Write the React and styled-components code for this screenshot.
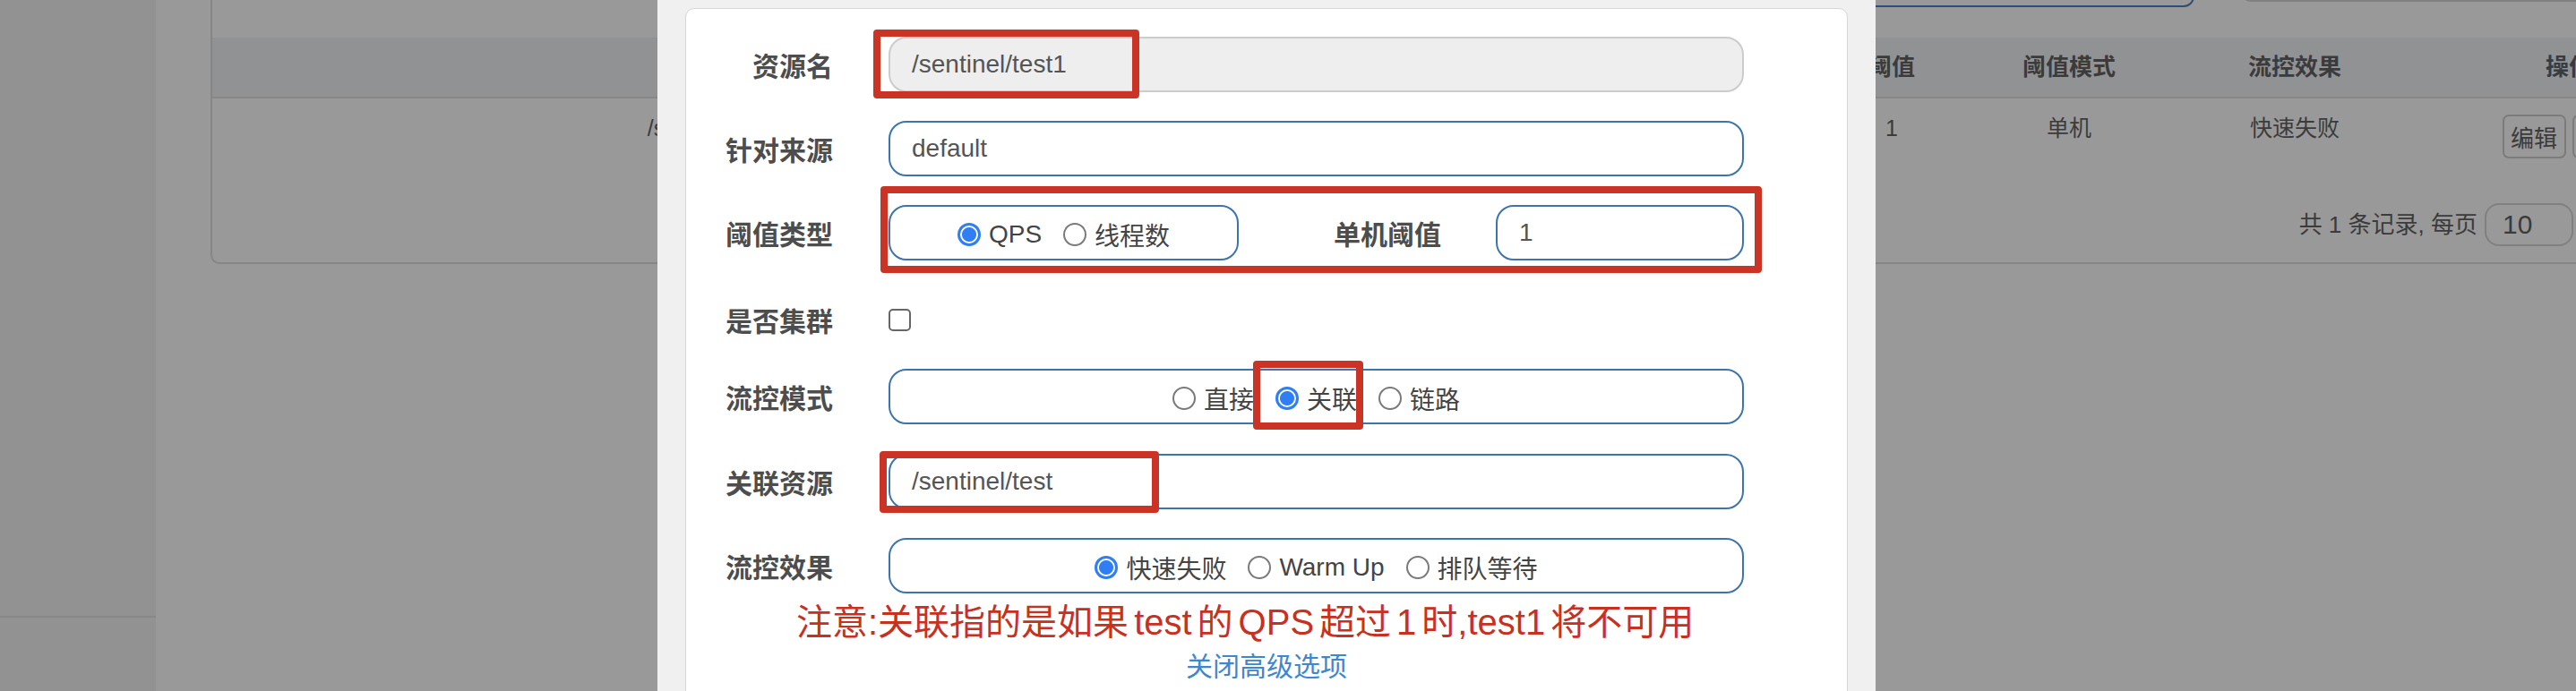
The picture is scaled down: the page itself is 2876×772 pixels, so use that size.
import styled, { createGlobalStyle } from 'styled-components';

const GlobalStyle = createGlobalStyle`
  html, body {
    margin: 0;
    padding: 0;
  }
  body {
    font-family: "Liberation Sans", "Noto Sans CJK SC", sans-serif;
    background: #999999;
  }
  * {
    box-sizing: border-box;
  }
`;

const Page = styled.div`
  position: relative;
  display: flex;
  width: 2876px;
  height: 772px;
  overflow: hidden;
  background: #999999;
`;

/* dimmed page behind the dialog */

const Sidebar = styled.aside`
  width: 174px;
  flex-shrink: 0;
  background: #929292;
`;

const SidebarMenu = styled.div`
  height: 690px;
  border-bottom: 2px solid #888888;
`;

const Main = styled.main`
  flex: 1;
  min-width: 0;
  padding-left: 61px;
`;

const Card = styled.section`
  width: 2800px;
  margin-top: -60px;
  border: 2px solid #868686;
  border-radius: 10px;
  color: #3b3b3b;
`;

const Toolbar = styled.div`
  display: flex;
  align-items: flex-start;
  gap: 51px;
  height: 100px;
  padding-left: 1665px;
`;

const SearchBox = styled.div`
  width: ${(p) => p.$width}px;
  height: 60px;
  margin-top: ${(p) => p.$top}px;
  border: 2px solid ${(p) => p.$color};
  border-radius: 12px;
`;

const columns = '1126px 627px 244px 152px 352px 260px';

const HeadRow = styled.div`
  display: grid;
  grid-template-columns: ${columns};
  align-items: center;
  height: 68px;
  background: #919294;
  border-bottom: 2px solid #878787;
  font-size: 26px;
  font-weight: 700;
`;

const BodyRow = styled.div`
  display: grid;
  grid-template-columns: ${columns};
  align-items: start;
  height: 86px;
  padding-top: 18px;
  font-size: 25px;
`;

const Cell = styled.div`
  text-align: center;
  line-height: 30px;
  white-space: nowrap;
`;

const Actions = styled.div`
  display: flex;
  justify-content: center;
  gap: 7px;
`;

const SmallButton = styled.div`
  width: 71px;
  height: 49px;
  border: 2px solid #7c7c7c;
  border-radius: 7px;
  display: flex;
  align-items: center;
  justify-content: center;
  font-size: 26px;
`;

const Pager = styled.div`
  display: flex;
  justify-content: flex-end;
  align-items: flex-start;
  gap: 8px;
  height: 97px;
  padding: 31px 160px 0 0;
  font-size: 26px;
`;

const PagerText = styled.span`
  line-height: 48px;
`;

const PageSize = styled.div`
  width: 99px;
  height: 48px;
  border: 2px solid #808080;
  border-radius: 16px;
  padding-left: 18px;
  display: flex;
  align-items: center;
  font-size: 30px;
`;

/* dialog */

const Dialog = styled.div`
  position: absolute;
  left: 734px;
  top: 0;
  width: 1360px;
  height: 772px;
  padding: 9px 31px 0;
  background: #f0f0f0;
`;

const DialogCard = styled.div`
  position: relative;
  height: 800px;
  padding-top: 31px;
  background: #ffffff;
  border: 1px solid #d6d6d6;
  border-radius: 10px;
`;

const FormRow = styled.div`
  display: grid;
  grid-template-columns: 164px 955px;
  column-gap: 62px;
  align-items: center;
  height: 62px;
  margin-top: ${(p) => p.$gap || 0}px;
`;

const Label = styled.label`
  text-align: right;
  font-size: 30px;
  font-weight: 700;
  color: #4d4d4d;
  white-space: nowrap;
`;

const TextInput = styled.div`
  width: ${(p) => (p.$width ? `${p.$width}px` : '100%')};
  height: 62px;
  display: flex;
  align-items: center;
  padding: 0 24px;
  border: 2px solid ${(p) => (p.$disabled ? '#cccccc' : '#3d74ae')};
  border-radius: 20px;
  background: ${(p) => (p.$disabled ? '#eeeeee' : '#ffffff')};
  font-size: 28px;
  color: #555555;
`;

const InlineGroup = styled.div`
  display: flex;
  align-items: center;
`;

const SubLabel = styled(Label)`
  flex: 1;
  padding-right: 61px;
`;

const RadioBox = styled.div`
  width: ${(p) => (p.$width ? `${p.$width}px` : '100%')};
  height: 62px;
  display: flex;
  align-items: center;
  justify-content: center;
  gap: 24px;
  border: 2px solid #3d74ae;
  border-radius: 20px;
  padding-top: 4px;
`;

const Option = styled.span`
  display: inline-flex;
  align-items: center;
  gap: 9px;
  font-size: 28px;
  color: #444444;
  white-space: nowrap;
`;

const Dot = styled.span`
  width: 26px;
  height: 26px;
  flex-shrink: 0;
  border-radius: 50%;
  border: ${(p) => (p.$checked ? '3px solid #2f7ef4' : '2px solid #7a7a7a')};
  background: ${(p) =>
    p.$checked
      ? 'radial-gradient(circle, #2f7ef4 0 7.5px, #ffffff 8.5px)'
      : '#ffffff'};
`;

const Checkbox = styled.span`
  width: 25px;
  height: 25px;
  border: 2px solid #666666;
  border-radius: 5px;
  background: #ffffff;
`;

const Notice = styled.p`
  margin: 9px 0 0;
  padding-left: 123px;
  font-size: 40px;
  line-height: 46px;
  color: #c8301f;
  white-space: nowrap;
`;

// small gaps between CJK and latin runs, like the browser's autospace
const Latin = styled.span`
  margin: 0 6px 0 ${(p) => (p.$tight ? 0 : 6)}px;
`;

const ToggleLink = styled.a`
  display: block;
  margin-top: 7px;
  text-align: center;
  font-size: 30px;
  line-height: 40px;
  color: #3d87d0;
  text-decoration: none;
`;

const Mark = styled.div`
  position: absolute;
  left: ${(p) => p.$x}px;
  top: ${(p) => p.$y}px;
  width: ${(p) => p.$w}px;
  height: ${(p) => p.$h}px;
  border: 8px solid #cb3424;
  border-radius: 4px;
  pointer-events: none;
`;

const Radio = ({ checked, children }) => (
  <Option>
    <Dot $checked={checked} />
    {children}
  </Option>
);

const App = () => {
  return (
    <Page>
      <GlobalStyle />
      <Sidebar>
        <SidebarMenu />
      </Sidebar>
      <Main>
        <Card>
          <Toolbar>
            <SearchBox $width={548} $top={6} $color="#2e4e79" />
            <SearchBox $width={500} $top={0} $color="#808080" />
          </Toolbar>
          <HeadRow>
            <Cell>资源名</Cell>
            <Cell>针对来源</Cell>
            <Cell>阈值</Cell>
            <Cell>阈值模式</Cell>
            <Cell>流控效果</Cell>
            <Cell>操作</Cell>
          </HeadRow>
          <BodyRow>
            <Cell>/sentinel/test1</Cell>
            <Cell>default</Cell>
            <Cell>1</Cell>
            <Cell>单机</Cell>
            <Cell>快速失败</Cell>
            <Actions>
              <SmallButton>编辑</SmallButton>
              <SmallButton>删除</SmallButton>
            </Actions>
          </BodyRow>
          <Pager>
            <PagerText>共 1 条记录, 每页</PagerText>
            <PageSize>10</PageSize>
          </Pager>
        </Card>
      </Main>

      <Dialog>
        <DialogCard>
          <FormRow>
            <Label>资源名</Label>
            <TextInput $disabled>/sentinel/test1</TextInput>
          </FormRow>
          <FormRow $gap={32}>
            <Label>针对来源</Label>
            <TextInput>default</TextInput>
          </FormRow>
          <FormRow $gap={32}>
            <Label>阈值类型</Label>
            <InlineGroup>
              <RadioBox $width={391}>
                <Radio checked>QPS</Radio>
                <Radio>线程数</Radio>
              </RadioBox>
              <SubLabel>单机阈值</SubLabel>
              <TextInput $width={277}>1</TextInput>
            </InlineGroup>
          </FormRow>
          <FormRow $gap={35}>
            <Label>是否集群</Label>
            <InlineGroup>
              <Checkbox />
            </InlineGroup>
          </FormRow>
          <FormRow $gap={24}>
            <Label>流控模式</Label>
            <RadioBox>
              <Radio>直接</Radio>
              <Radio checked>关联</Radio>
              <Radio>链路</Radio>
            </RadioBox>
          </FormRow>
          <FormRow $gap={33}>
            <Label>关联资源</Label>
            <TextInput>/sentinel/test</TextInput>
          </FormRow>
          <FormRow $gap={32}>
            <Label>流控效果</Label>
            <RadioBox>
              <Radio checked>快速失败</Radio>
              <Radio>Warm Up</Radio>
              <Radio>排队等待</Radio>
            </RadioBox>
          </FormRow>
          <Notice>
            注意:关联指的是如果<Latin>test</Latin>的<Latin>QPS</Latin>超过
            <Latin>1</Latin>时,<Latin $tight>test1</Latin>将不可用
          </Notice>
          <ToggleLink>关闭高级选项</ToggleLink>

          <Mark $x={209} $y={23} $w={297} $h={77} />
          <Mark $x={217} $y={198} $w={984} $h={97} />
          <Mark $x={633} $y={393} $w={123} $h={77} />
          <Mark $x={216} $y={494} $w={312} $h={69} />
        </DialogCard>
      </Dialog>
    </Page>
  );
};

export default App;
